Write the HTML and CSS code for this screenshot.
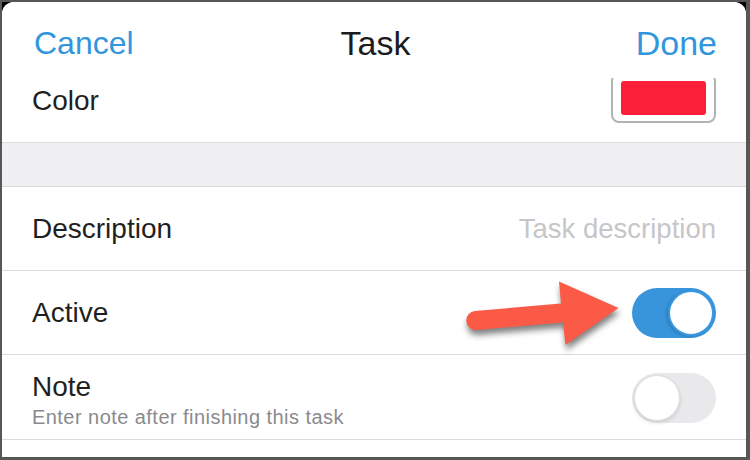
FILE: index.html
```html
<html><head><link rel="stylesheet" href="styles.css"></head><body>
  <div class="frame">
    <div class="sheet">
      <header class="nav">
        <span class="nav-btn">Cancel</span>
        <h1 class="nav-title">Task</h1>
        <span class="nav-btn nav-done">Done</span>
      </header>
      <div class="form">
        <div class="row row-color">
          <span class="label">Color</span>
          <span class="swatch"><span class="swatch-fill"></span></span>
        </div>
        <div class="group-gap"></div>
        <div class="row">
          <span class="label">Description</span>
          <span class="placeholder">Task description</span>
        </div>
        <div class="row">
          <span class="label">Active</span>
          <span class="switch on"></span>
        </div>
        <div class="row row-note">
          <div class="note-text">
            <div class="label">Note</div>
            <div class="hint">Enter note after finishing this task</div>
          </div>
          <span class="switch"></span>
        </div>
      </div>
      <svg class="arrow" width="175" height="90" viewBox="0 0 175 90">
        <path d="M18 40 L104 32.5 L102 10.5 L161.5 37 L108.5 74 L106 51.5 L19.6 59 A9.5 9.5 0 0 1 18 40 Z" fill="#fb5a47"/>
      </svg>
    </div>
  </div>
</body></html>
```

FILE: styles.css
```css
body {
  margin: 0;
  background: #000;
  font-family: 'Liberation Sans', Arial, sans-serif;
}
.frame {
  width: 750px;
  height: 460px;
  box-sizing: border-box;
  background: #000;
  border-style: solid;
  border-color: #575757;
  border-width: 2px 4px 3px 2px;
}
.sheet {
  position: relative;
  height: 100%;
  background: #fff;
  border-radius: 12px 12px 0 0;
  overflow: hidden;
}
.nav {
  height: 76px;
  box-sizing: border-box;
  padding: 6px 29px 0 32px;
  display: grid;
  grid-template-columns: 1fr auto 1fr;
  align-items: center;
  background: #fff;
  position: relative;
  z-index: 1;
}
.nav-btn {
  font-size: 32px;
  color: #3196dd;
}
.nav-done {
  justify-self: end;
  font-size: 34px;
}
.nav-title {
  margin: 0;
  font-size: 34px;
  font-weight: 400;
  color: #1c1c1e;
}
.form {
  overflow: hidden;
}
.row {
  height: 83px;
  padding: 0 30px;
  display: flex;
  align-items: center;
  justify-content: space-between;
  border-bottom: 1px solid #dcdcde;
}
.row-color {
  margin-top: -19px;
}
.row-note {
  padding-top: 1px;
}
.label {
  font-size: 28px;
  color: #1f1f21;
}
.placeholder {
  font-size: 27.5px;
  color: #c6c6c9;
}
.group-gap {
  height: 43px;
  background: #f0eff4;
  border-bottom: 1px solid #dcdcde;
}
.swatch {
  width: 105px;
  height: 50px;
  margin-top: -5px;
  box-sizing: border-box;
  padding: 6px 8px;
  border: 2px solid #b3b3b3;
  border-radius: 8px;
  display: flex;
}
.swatch-fill {
  flex: 1;
  background: #fc1f3a;
  border-radius: 3px;
}
.note-text {
  padding-top: 5px;
}
.note-text .label {
  line-height: 30px;
}
.hint {
  margin-top: 3px;
  font-size: 20px;
  line-height: 24px;
  letter-spacing: 0.45px;
  color: #8a8a8e;
}
.switch {
  position: relative;
  width: 84px;
  height: 50px;
  border-radius: 25px;
  background: #e9e9eb;
  flex-shrink: 0;
}
.switch::after {
  content: "";
  position: absolute;
  top: 2px;
  left: 2px;
  width: 46px;
  height: 46px;
  box-sizing: border-box;
  border-radius: 50%;
  background: #fff;
  border: 1px solid #dedede;
  box-shadow: 0 2px 4px rgba(0,0,0,0.12);
}
.switch.on {
  background: #3895dc;
}
.switch.on::after {
  left: auto;
  right: 2px;
  border: 2px solid #3a98de;
  box-shadow: -2px 1px 3px rgba(0,0,0,0.15);
}
.arrow {
  position: absolute;
  left: 455px;
  top: 269px;
  filter: drop-shadow(1px 5px 3px rgba(0,0,0,0.5));
}
```
